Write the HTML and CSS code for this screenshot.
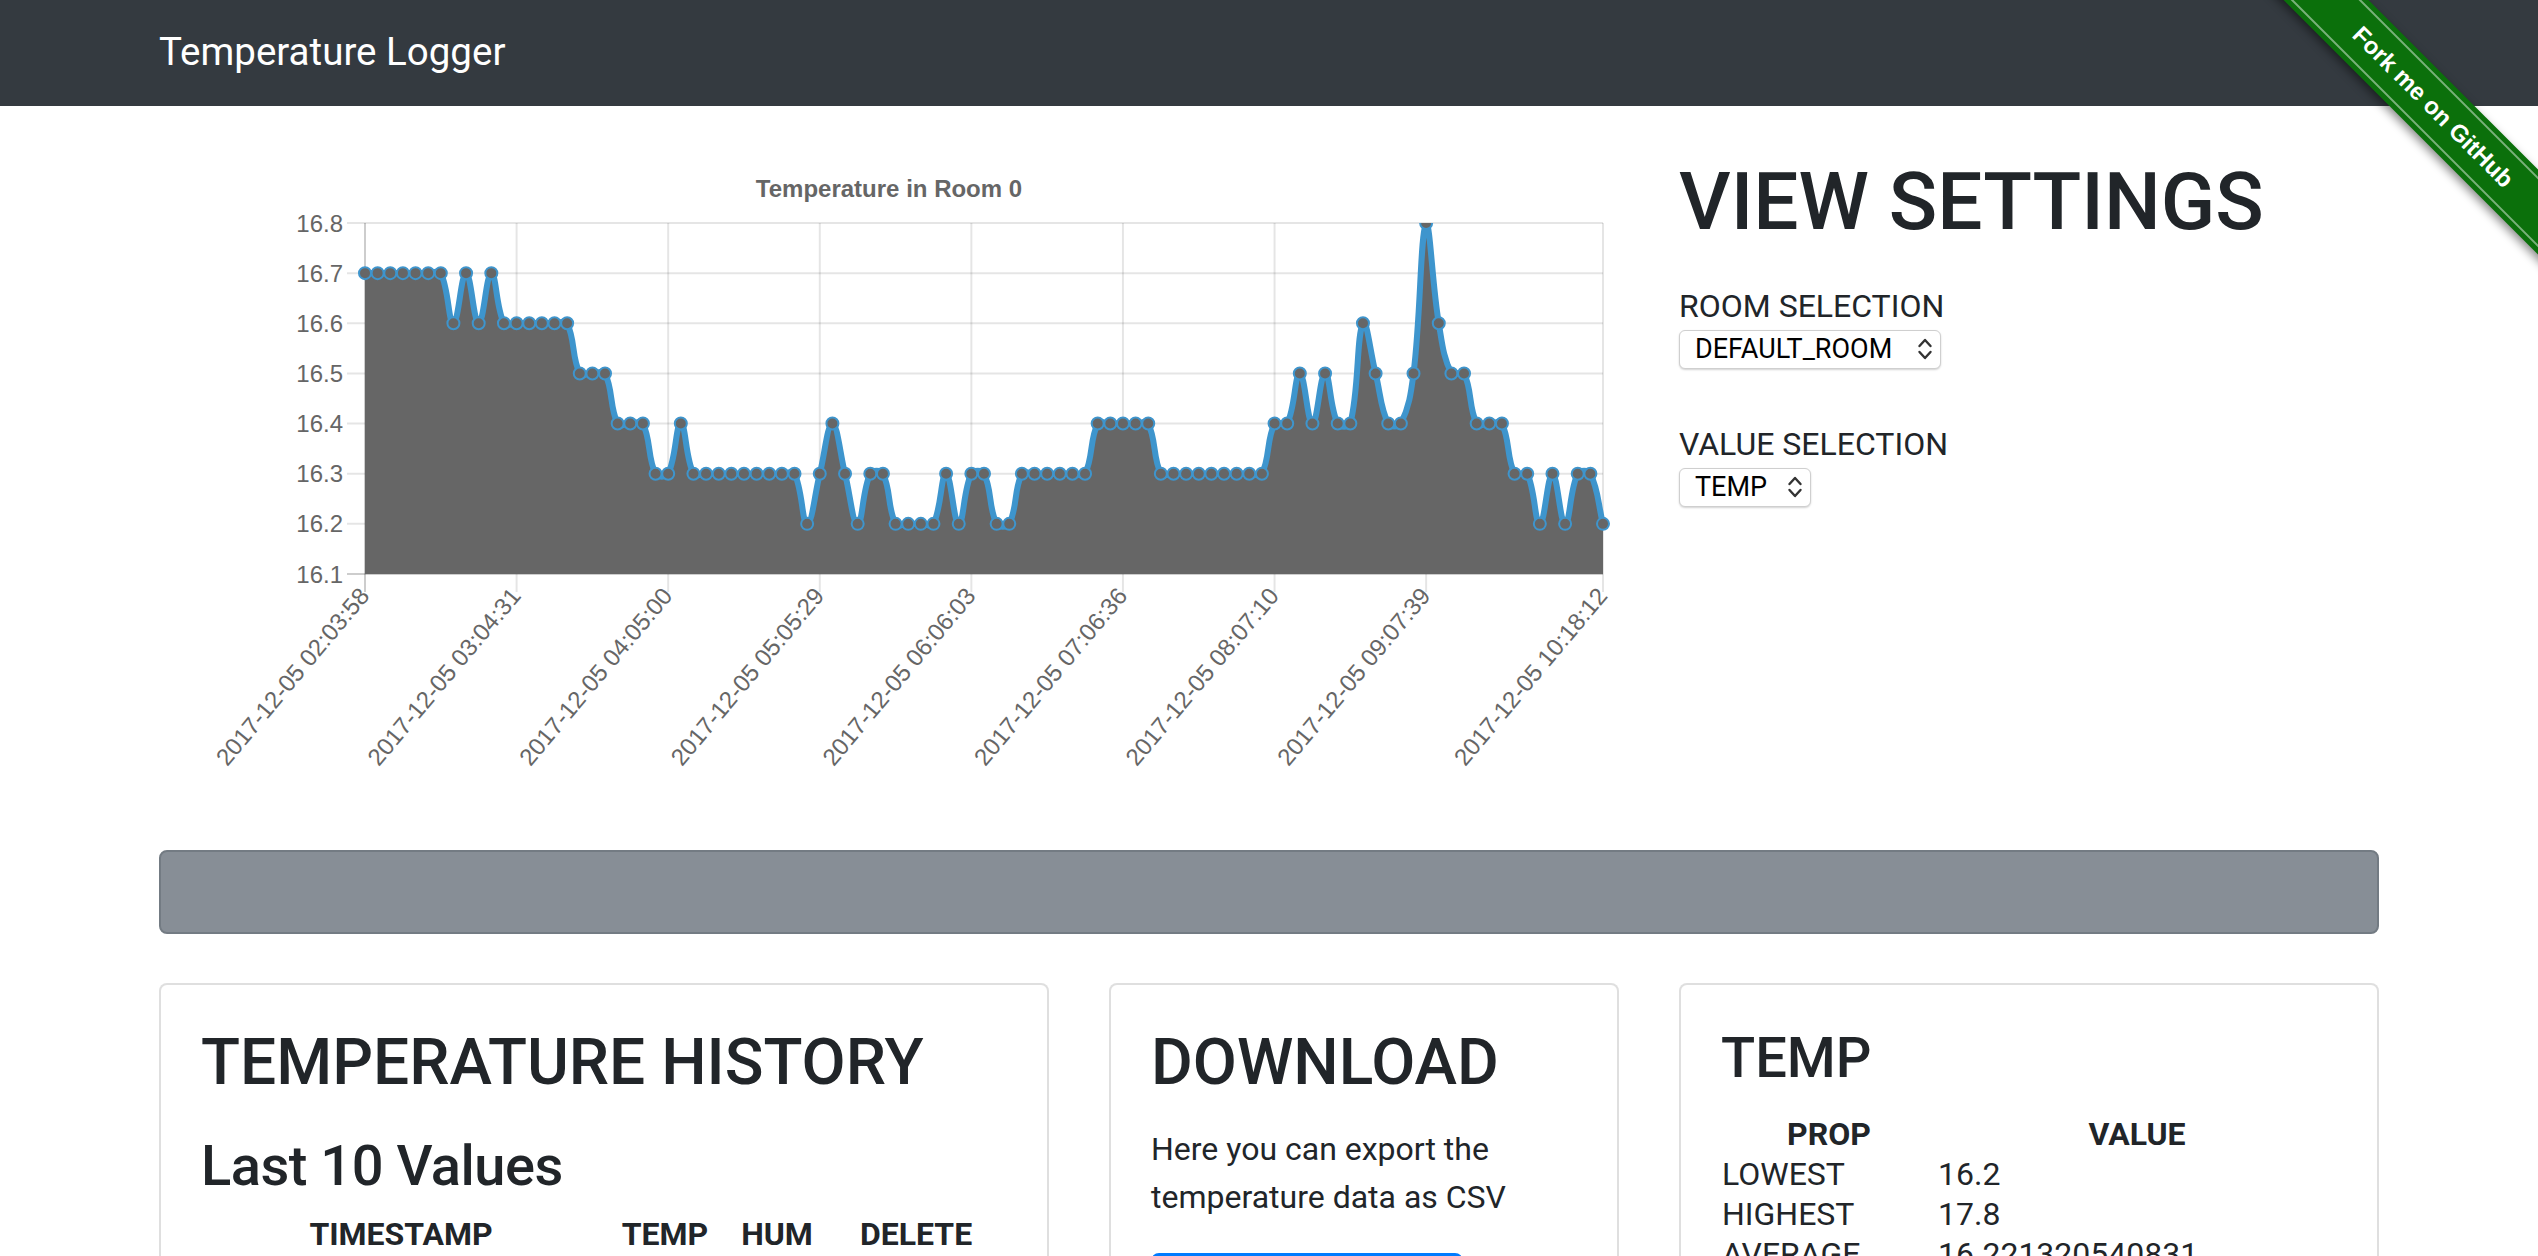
FILE: index.html
```html
<!DOCTYPE html>
<html lang="en">
<head>
<meta charset="utf-8">
<title>Temperature Logger</title>
<link rel="stylesheet" href="styles.css">
</head>
<body>
<nav class="navbar">
  <div class="container">
    <a class="brand" href="#">Temperature Logger</a>
  </div>
</nav>

<div class="ribbon-corner">
  <a class="ribbon" href="#">Fork me on GitHub</a>
</div>

<main class="container">
  <section class="row top-row">
    <div class="col col-8">
      <svg id="temp-chart" class="chart" width="1460" height="650" viewBox="0 0 1460 650" role="img" aria-label="Temperature in Room 0"></svg>
    </div>
    <div class="col col-4">
      <h1 class="settings-title">VIEW SETTINGS</h1>
      <div class="field">
        <label class="field-label" for="room">ROOM SELECTION</label>
        <span class="select-wrap">
          <select id="room" class="sel sel-room"><option>DEFAULT_ROOM</option></select>
          <svg class="sel-arrows" width="16" height="26" viewBox="0 0 16 26"><path d="M2.5 10 L8 4 L13.5 10 M2.5 16 L8 22 L13.5 16"/></svg>
        </span>
      </div>
      <div class="field field-gap">
        <label class="field-label" for="value">VALUE SELECTION</label>
        <span class="select-wrap">
          <select id="value" class="sel sel-value"><option>TEMP</option><option>HUM</option></select>
          <svg class="sel-arrows" width="16" height="26" viewBox="0 0 16 26"><path d="M2.5 10 L8 4 L13.5 10 M2.5 16 L8 22 L13.5 16"/></svg>
        </span>
      </div>
    </div>
  </section>

  <div class="status-bar"></div>

  <section class="row cards-row">
    <div class="col col-5">
      <div class="card">
        <h2 class="card-title title-history">TEMPERATURE HISTORY</h2>
        <h3 class="card-subtitle">Last 10 Values</h3>
        <table class="history-table">
          <colgroup><col class="c-ts"><col class="c-temp"><col class="c-hum"><col class="c-del"></colgroup>
          <thead><tr><th>TIMESTAMP</th><th>TEMP</th><th>HUM</th><th>DELETE</th></tr></thead>
          <tbody>
            <tr><td>2017-12-05 10:18:12</td><td>16.2</td><td>41.0</td><td><button class="btn-del">X</button></td></tr>
            <tr><td>2017-12-05 10:13:10</td><td>16.3</td><td>41.0</td><td><button class="btn-del">X</button></td></tr>
            <tr><td>2017-12-05 10:08:08</td><td>16.3</td><td>41.0</td><td><button class="btn-del">X</button></td></tr>
          </tbody>
        </table>
      </div>
    </div>
    <div class="col col-3">
      <div class="card">
        <h2 class="card-title title-download">DOWNLOAD</h2>
        <p class="card-text">Here you can export the temperature data as CSV</p>
        <a class="btn-download" href="#">DOWNLOAD CSV</a>
      </div>
    </div>
    <div class="col col-4">
      <div class="card">
        <h3 class="card-title title-temp">TEMP</h3>
        <table class="stats-table">
          <thead><tr><th class="prop">PROP</th><th>VALUE</th></tr></thead>
          <tbody>
            <tr><td>LOWEST</td><td>16.2</td></tr>
            <tr><td>HIGHEST</td><td>17.8</td></tr>
            <tr><td>AVERAGE</td><td>16.221320540831</td></tr>
          </tbody>
        </table>
      </div>
    </div>
  </section>
</main>
<script src="script.js"></script>
</body>
</html>
```

FILE: styles.css
```css
* { box-sizing: border-box; }
html { scrollbar-width: none; }
html::-webkit-scrollbar { width: 0; height: 0; }
html, body { margin: 0; padding: 0; }
body {
  font-family: Roboto, "Liberation Sans", Arial, sans-serif;
  font-size: 32px;
  line-height: 1.5;
  color: #212529;
  background: #fff;
  position: relative;
}

.container { width: 2280px; margin: 0 auto; padding: 0 30px; }

/* navbar */
.navbar { background: #343a40; height: 106px; display: flex; align-items: center; }
.brand { color: #fff; font-size: 38.5px; line-height: 1.5; text-decoration: none; display: inline-block; margin-top: -3px; }

/* ribbon */
.ribbon-corner {
  position: absolute; top: 0; right: 0;
  width: 300px; height: 300px; overflow: hidden; z-index: 10;
}
.ribbon {
  position: absolute; left: -15px; top: 77px;
  width: 420px; height: 60px;
  background: #0b700b; color: #fff;
  transform: rotate(45deg);
  display: flex; align-items: center; justify-content: center;
  font: 700 24px "Liberation Sans", Arial, sans-serif;
  text-decoration: none;
  box-shadow: 0 4px 10px rgba(0, 0, 0, .45);
}
.ribbon::before {
  content: ""; position: absolute; left: 0; right: 0; top: 5px; bottom: 5px;
  border-top: 2px solid rgba(255, 255, 255, .45);
  border-bottom: 2px solid rgba(255, 255, 255, .45);
}

/* grid */
.row { display: flex; margin: 0 -30px; }
.col { padding: 0 30px; }
.col-8 { flex: 0 0 66.6667%; max-width: 66.6667%; }
.col-5 { flex: 0 0 41.6667%; max-width: 41.6667%; }
.col-4 { flex: 0 0 33.3333%; max-width: 33.3333%; }
.col-3 { flex: 0 0 25%; max-width: 25%; }

.top-row { margin-top: 48px; }
.chart { display: block; width: 1460px; height: 650px; }

.chart-text { font-family: "Liberation Sans", Arial, sans-serif; font-size: 24px; fill: #666; }
.chart-title { font-weight: 700; }
.grid-line { stroke: rgba(0, 0, 0, .1); stroke-width: 2; }
.chart-fill { fill: #666; }
.chart-line { fill: none; stroke: #3e95cd; stroke-width: 6; }
.chart-point { fill: #666; stroke: #3e95cd; stroke-width: 2; }

/* settings */
.settings-title { font-size: 80px; font-weight: 500; line-height: 1.2; margin: 0 0 32px; }
.field { display: flex; flex-direction: column; align-items: flex-start; }
.field-gap { margin-top: 51px; }
.field-label { font-size: 32px; line-height: 48px; }
.select-wrap { position: relative; display: inline-block; }
.sel {
  -webkit-appearance: none; appearance: none;
  font: 400 27px/1 Roboto, "Liberation Sans", sans-serif;
  color: #000; background: #fff;
  border: 1px solid #cfcfcf; border-radius: 6px;
  height: 39px; padding: 0 34px 0 15px; margin: 0;
  box-shadow: 0 1px 2px rgba(0, 0, 0, .18);
  display: block;
}
.sel-room { width: 262px; }
.sel-value { width: 132px; }
.sel-arrows { position: absolute; right: 8px; top: 6px; pointer-events: none; }
.sel-arrows path { fill: none; stroke: #333; stroke-width: 2.4; stroke-linecap: round; stroke-linejoin: round; }

/* status bar */
.status-bar {
  margin-top: 46px; height: 84px;
  background: #878e96; border: 2px solid #737b83; border-radius: 8px;
}

/* cards */
.cards-row { margin-top: 49px; }
.card { border: 2px solid rgba(0, 0, 0, .125); border-radius: 8px; padding: 40px; background: #fff; }
.card-title { font-weight: 500; line-height: 1.2; margin: 0 0 24px; }
h2.card-title { font-size: 64px; }
h3.card-title { font-size: 56px; }
.title-history { margin-bottom: 31px; }
.title-download { margin-bottom: 23px; }
.title-temp { margin-bottom: 22px; }
.card-subtitle { font-size: 56px; font-weight: 500; line-height: 1.2; margin: 0 0 14px; letter-spacing: -0.5px; }
.card-text { margin: 0 0 16px; }

table { border-collapse: collapse; }
th, td { padding: 1px; line-height: 38px; }
th { font-weight: 700; text-align: center; }
td { text-align: left; }

.history-table { table-layout: fixed; width: 806px; }
.c-ts { width: 400px; }
.c-temp { width: 128px; }
.c-hum { width: 96px; }
.c-del { width: 182px; }
.btn-del { font: 400 28px Roboto, sans-serif; color: #fff; background: #dc3545; border: 0; border-radius: 6px; padding: 2px 16px; }

.stats-table { width: 100%; }
.stats-table .prop { width: 216px; }

.btn-download {
  display: inline-block; margin-top: 16px; width: 312px;
  background: #007bff; color: #fff; text-decoration: none; text-align: center;
  border: 2px solid #007bff; border-radius: 8px;
  padding: 12px 24px; font-size: 32px; line-height: 1.5;
}
```

FILE: script.js
```js
(function () {
  var NS = "http://www.w3.org/2000/svg";
  var svg = document.getElementById("temp-chart");

  var runs = [[16.7,7],[16.6,1],[16.7,1],[16.6,1],[16.7,1],[16.6,6],[16.5,3],[16.4,3],[16.3,2],[16.4,1],
    [16.3,9],[16.2,1],[16.3,1],[16.4,1],[16.3,1],[16.2,1],[16.3,2],[16.2,4],[16.3,1],[16.2,1],[16.3,2],
    [16.2,2],[16.3,6],[16.4,5],[16.3,9],[16.4,2],[16.5,1],[16.4,1],[16.5,1],[16.4,2],[16.6,1],[16.5,1],
    [16.4,2],[16.5,1],[16.8,1],[16.6,1],[16.5,2],[16.4,3],[16.3,2],[16.2,1],[16.3,1],[16.2,1],[16.3,2],[16.2,1]];
  var data = [];
  runs.forEach(function (r) { for (var k = 0; k < r[1]; k++) data.push(r[0]); });

  var ticks = [[0, "2017-12-05 02:03:58"], [12, "2017-12-05 03:04:31"], [24, "2017-12-05 04:05:00"],
    [36, "2017-12-05 05:05:29"], [48, "2017-12-05 06:06:03"], [60, "2017-12-05 07:06:36"],
    [72, "2017-12-05 08:07:10"], [84, "2017-12-05 09:07:39"], [98, "2017-12-05 10:18:12"]];

  var L = 206, R = 1444, T = 69, B = 420, MIN = 16.1, MAX = 16.8;
  var n = data.length, dx = (R - L) / (n - 1);
  function py(v) { return B - (v - MIN) / (MAX - MIN) * (B - T); }

  function el(name, attrs, text) {
    var e = document.createElementNS(NS, name);
    for (var k in attrs) e.setAttribute(k, attrs[k]);
    if (text !== undefined) e.textContent = text;
    svg.appendChild(e);
    return e;
  }

  // clip to plot area
  var defs = el("defs", {});
  var cp = document.createElementNS(NS, "clipPath");
  cp.setAttribute("id", "plot-clip");
  var cr = document.createElementNS(NS, "rect");
  cr.setAttribute("x", L - 8); cr.setAttribute("y", T); cr.setAttribute("width", R - L + 16); cr.setAttribute("height", B - T + 8);
  cp.appendChild(cr); defs.appendChild(cp);

  // title
  el("text", { x: 730, y: 34, "text-anchor": "middle", "dominant-baseline": "central", "class": "chart-text chart-title" }, "Temperature in Room 0");

  // horizontal grid + y labels
  for (var v = 0; v <= 7; v++) {
    var val = MIN + v / 10;
    var y = py(val);
    el("line", { x1: 188, y1: y, x2: R, y2: y, "class": "grid-line" });
    el("text", { x: 184, y: y, "text-anchor": "end", "dominant-baseline": "central", "class": "chart-text" }, val.toFixed(1));
  }
  // vertical grid + x labels
  ticks.forEach(function (t) {
    var x = L + t[0] * dx;
    el("line", { x1: x, y1: T, x2: x, y2: B + 18, "class": "grid-line" });
    el("text", { transform: "translate(" + (x - 1) + "," + 437 + ") rotate(-50)", "text-anchor": "end", "dominant-baseline": "central", "class": "chart-text" }, t[1]);
  });
  el("line", { x1: L, y1: T, x2: L, y2: B + 18, "class": "grid-line" });
  el("line", { x1: 188, y1: B, x2: R, y2: B, "class": "grid-line" });

  // Chart.js-style bezier control points (tension 0.4, capped to area)
  var pts = data.map(function (v, i) { return { x: L + i * dx, y: py(v) }; });
  var tension = 0.4;
  function cap(v, lo, hi) { return Math.max(Math.min(v, hi), lo); }
  pts.forEach(function (p, i) {
    var prev = pts[i - 1] || p, next = pts[i + 1] || p;
    var d01 = Math.hypot(p.x - prev.x, p.y - prev.y), d12 = Math.hypot(next.x - p.x, next.y - p.y);
    var s01 = d01 / (d01 + d12), s12 = d12 / (d01 + d12);
    if (isNaN(s01)) s01 = 0; if (isNaN(s12)) s12 = 0;
    var fa = tension * s01, fb = tension * s12;
    p.c1x = cap(p.x - fa * (next.x - prev.x), L, R); p.c1y = cap(p.y - fa * (next.y - prev.y), T, B);
    p.c2x = cap(p.x + fb * (next.x - prev.x), L, R); p.c2y = cap(p.y + fb * (next.y - prev.y), T, B);
  });
  var d = "M" + pts[0].x.toFixed(2) + " " + pts[0].y.toFixed(2);
  for (var i = 1; i < n; i++) {
    var a = pts[i - 1], b = pts[i];
    d += " C" + a.c2x.toFixed(2) + " " + a.c2y.toFixed(2) + " " + b.c1x.toFixed(2) + " " + b.c1y.toFixed(2) + " " + b.x.toFixed(2) + " " + b.y.toFixed(2);
  }
  el("path", { d: d + " L" + R + " " + B + " L" + L + " " + B + " Z", "class": "chart-fill", "clip-path": "url(#plot-clip)" });
  el("path", { d: d, "class": "chart-line", "clip-path": "url(#plot-clip)" });

  var g = el("g", { "clip-path": "url(#plot-clip)" });
  pts.forEach(function (p) {
    var c = document.createElementNS(NS, "circle");
    c.setAttribute("cx", p.x); c.setAttribute("cy", p.y); c.setAttribute("r", 6);
    c.setAttribute("class", "chart-point");
    g.appendChild(c);
  });
})();
```
